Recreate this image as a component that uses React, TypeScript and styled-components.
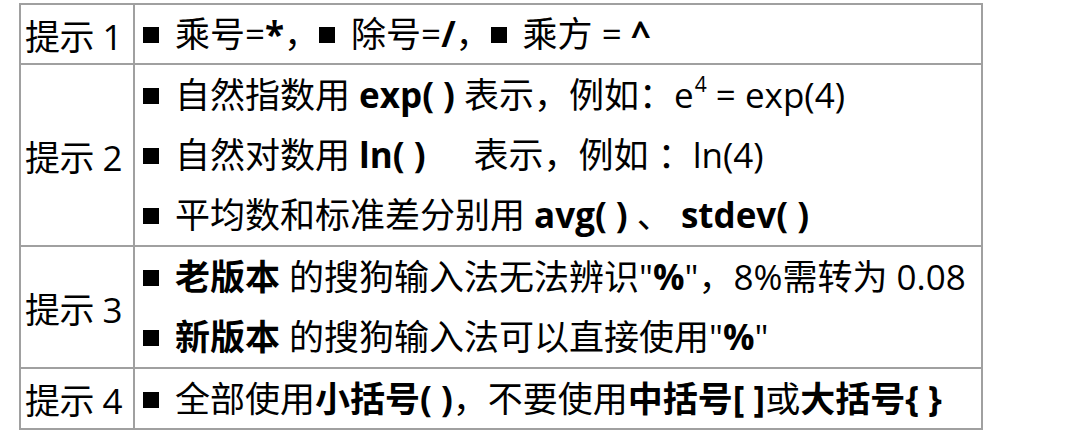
import styled, { createGlobalStyle } from 'styled-components'

const Global = createGlobalStyle`
  html, body {
    margin: 0;
    padding: 0;
    background: #fff;
  }
  body {
    font-family: "Open Sans", "Noto Sans CJK SC", sans-serif;
    color: #000;
  }
`

const Page = styled.div`
  padding: 3px 0 0 19px;
`

const Table = styled.table`
  border-collapse: collapse;
  width: 964px;
  font-size: 35px;
  font-family: "Open Sans", "Noto Sans CJK SC", sans-serif;
  border: 2px solid #a0a0a0;

  td {
    border: 2px solid #a0a0a0;
  }
`

const LabelCell = styled.td`
  width: 106px;
  padding: 0 2px 0 4px;
  white-space: nowrap;
  vertical-align: middle;
  letter-spacing: -0.5px;
`

const ContentCell = styled.td`
  padding: 0 4px;
  vertical-align: middle;
`

const Line = styled.div<{ $h?: number }>`
  height: ${(p) => p.$h ?? 60}px;
  line-height: ${(p) => p.$h ?? 60}px;
  white-space: nowrap;
  display: flex;
  align-items: center;
`

const Bullet = styled.span<{ $gap?: number }>`
  display: inline-block;
  width: 16px;
  height: 16px;
  background: #000;
  margin: 2px 16px 0 ${(p) => p.$gap ?? 4}px;
  flex: none;
`

const B = styled.b`
  font-weight: 700;
`

const Gap = styled.span<{ $w: number }>`
  display: inline-block;
  width: ${(p) => p.$w}px;
`

const Sup = styled.sup`
  font-size: 0.6em;
  line-height: 0;
  vertical-align: 0.75em;
  margin-left: 1px;
`

const Txt = styled.span`
  white-space: pre;
`

export default function App() {
  return (
    <Page>
      <Global />
      <Table>
        <tbody>
          <tr>
            <LabelCell>提示 1</LabelCell>
            <ContentCell>
              <Line $h={58}>
                <Bullet />
                <Txt>乘号=<B>*</B>，</Txt>
                <Bullet $gap={0} />
                <Txt>除号=<B>/</B>，</Txt>
                <Bullet $gap={0} />
                <Txt>乘方 = <B>^</B></Txt>
              </Line>
            </ContentCell>
          </tr>
          <tr>
            <LabelCell>提示 2</LabelCell>
            <ContentCell>
              <Line>
                <Bullet />
                <Txt>自然指数用 <B>exp( )</B> 表示，例如：e<Sup>4</Sup> = exp(4)</Txt>
              </Line>
              <Line>
                <Bullet />
                <Txt>自然对数用 <B>ln( )</B><Gap $w={48} />表示，例如 ：ln(4)</Txt>
              </Line>
              <Line>
                <Bullet />
                <Txt>平均数和标准差分别用 <B>avg( )</B> 、 <B>stdev( )</B></Txt>
              </Line>
            </ContentCell>
          </tr>
          <tr>
            <LabelCell>提示 3</LabelCell>
            <ContentCell>
              <Line>
                <Bullet />
                <Txt><B>老版本</B> 的搜狗输入法无法辨识"<B>%</B>"，8%需转为 0.08</Txt>
              </Line>
              <Line>
                <Bullet />
                <Txt><B>新版本</B> 的搜狗输入法可以直接使用"<B>%</B>"</Txt>
              </Line>
            </ContentCell>
          </tr>
          <tr>
            <LabelCell>提示 4</LabelCell>
            <ContentCell>
              <Line $h={59}>
                <Bullet />
                <Txt>全部使用<B>小括号( )</B>，不要使用<B>中括号[ ]</B>或<B>大括号{'{ }'}</B></Txt>
              </Line>
            </ContentCell>
          </tr>
        </tbody>
      </Table>
    </Page>
  )
}
